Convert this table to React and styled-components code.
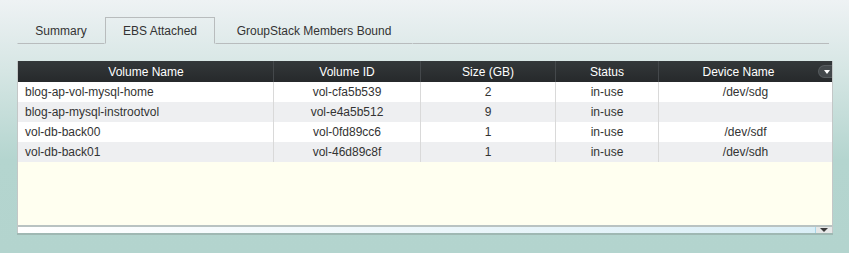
import React from "react";
import styled, { createGlobalStyle } from "styled-components";

const GlobalStyle = createGlobalStyle`
  html, body {
    margin: 0;
    padding: 0;
    height: 100%;
  }
  body {
    background: linear-gradient(180deg, #eef2f4 0px, #d6e6e4 70px, #b4d5cf 160px, #b3d4ce 100%);
    font-family: "Liberation Sans", Arial, sans-serif;
    font-size: 12px;
    color: #333;
  }
`;

const Page = styled.div`
  padding: 17px 16px 0 17px;
  height: 253px;
  box-sizing: border-box;
`;

const TabBar = styled.div`
  display: flex;
  height: 27px;
  margin-right: 4px;
`;

const Tab = styled.div`
  display: flex;
  align-items: center;
  justify-content: center;
  width: ${(p) => p.w}px;
  padding-top: 1px;
  box-sizing: border-box;
  color: #333;
  border: 1px solid;
  border-color: ${(p) => (p.active ? "#b8bcbd #b8bcbd transparent" : "transparent transparent #b8bcbd")};
  cursor: pointer;
`;

const TabFill = styled.div`
  flex: 1;
  border-bottom: 1px solid #b8bcbd;
`;

const Grid = styled.div`
  margin-top: 17px;
  display: flex;
  flex-direction: column;
  border-left: 1px solid #c3c7c7;
  border-right: 1px solid #c3c7c7;
  box-shadow: 0 2px 0 #9fb8b3;
`;

const cols = "255px 147px 135px 103px 1fr";

const HeaderRow = styled.div`
  display: grid;
  grid-template-columns: ${cols};
  height: 21px;
  background: linear-gradient(180deg, #34383a, #26292b);
  color: #fff;
  position: relative;
`;

const HeaderCell = styled.div`
  display: flex;
  align-items: center;
  justify-content: center;
  border-left: 1px solid ${(p) => (p.first ? "transparent" : "#44484b")};
  padding-right: ${(p) => (p.last ? "14px" : "0")};
`;

const MenuButton = styled.div`
  position: absolute;
  right: 0;
  top: 4px;
  width: 14px;
  height: 13px;
  border-radius: 7px 0 0 7px;
  background: #44494c;
  border: 1px solid #575c5f;
  border-right: none;
  box-sizing: border-box;
  display: flex;
  align-items: center;
  justify-content: center;

  &::after {
    content: "";
    border-left: 3px solid transparent;
    border-right: 3px solid transparent;
    border-top: 4px solid #fff;
    margin-left: 2px;
  }
`;

const Row = styled.div`
  display: grid;
  grid-template-columns: ${cols};
  height: 20px;
  background: ${(p) => (p.alt ? "#eeeff1" : "#fff")};
`;

const Cell = styled.div`
  display: flex;
  align-items: center;
  justify-content: ${(p) => (p.left ? "flex-start" : "center")};
  padding-left: ${(p) => (p.left ? "6px" : "0")};
  border-left: 1px solid ${(p) => (p.first ? "transparent" : "#d9d9d9")};
  color: #333;
  white-space: nowrap;
`;

const Empty = styled.div`
  height: 63px;
  background: #fffff0;
  border-bottom: 2px solid #b9c3c2;
`;

const ScrollTrack = styled.div`
  display: flex;
  height: 6px;
  background: linear-gradient(90deg, #ffffff, #d9eef6);
`;

const ScrollThumb = styled.div`
  flex: 1;
  border-right: 1px solid #a8d8ea;
`;

const ScrollArrow = styled.div`
  width: 16px;
  background: #e6e8e8;
  display: flex;
  align-items: center;
  justify-content: center;

  &::after {
    content: "";
    border-left: 4px solid transparent;
    border-right: 4px solid transparent;
    border-top: 4px solid #3a3a3a;
  }
`;

const tabs = [
  { label: "Summary", w: 88 },
  { label: "EBS Attached", w: 110, active: true },
  { label: "GroupStack Members Bound", w: 198 },
];

const volumes = [
  { name: "blog-ap-vol-mysql-home", id: "vol-cfa5b539", size: 2, status: "in-use", device: "/dev/sdg" },
  { name: "blog-ap-mysql-instrootvol", id: "vol-e4a5b512", size: 9, status: "in-use", device: "" },
  { name: "vol-db-back00", id: "vol-0fd89cc6", size: 1, status: "in-use", device: "/dev/sdf" },
  { name: "vol-db-back01", id: "vol-46d89c8f", size: 1, status: "in-use", device: "/dev/sdh" },
];

const headers = ["Volume Name", "Volume ID", "Size (GB)", "Status", "Device Name"];

export default function App() {
  return (
    <Page>
      <GlobalStyle />
      <TabBar>
        {tabs.map((t) => (
          <Tab key={t.label} w={t.w} active={t.active}>
            {t.label}
          </Tab>
        ))}
        <TabFill />
      </TabBar>
      <Grid>
        <HeaderRow>
          {headers.map((h, i) => (
            <HeaderCell key={h} first={i === 0} last={i === headers.length - 1}>
              {h}
            </HeaderCell>
          ))}
          <MenuButton />
        </HeaderRow>
        {volumes.map((v, i) => (
          <Row key={v.id} alt={i % 2 === 1}>
            <Cell first left>{v.name}</Cell>
            <Cell>{v.id}</Cell>
            <Cell>{v.size}</Cell>
            <Cell>{v.status}</Cell>
            <Cell>{v.device}</Cell>
          </Row>
        ))}
        <Empty />
        <ScrollTrack>
          <ScrollThumb />
          <ScrollArrow />
        </ScrollTrack>
      </Grid>
    </Page>
  );
}
